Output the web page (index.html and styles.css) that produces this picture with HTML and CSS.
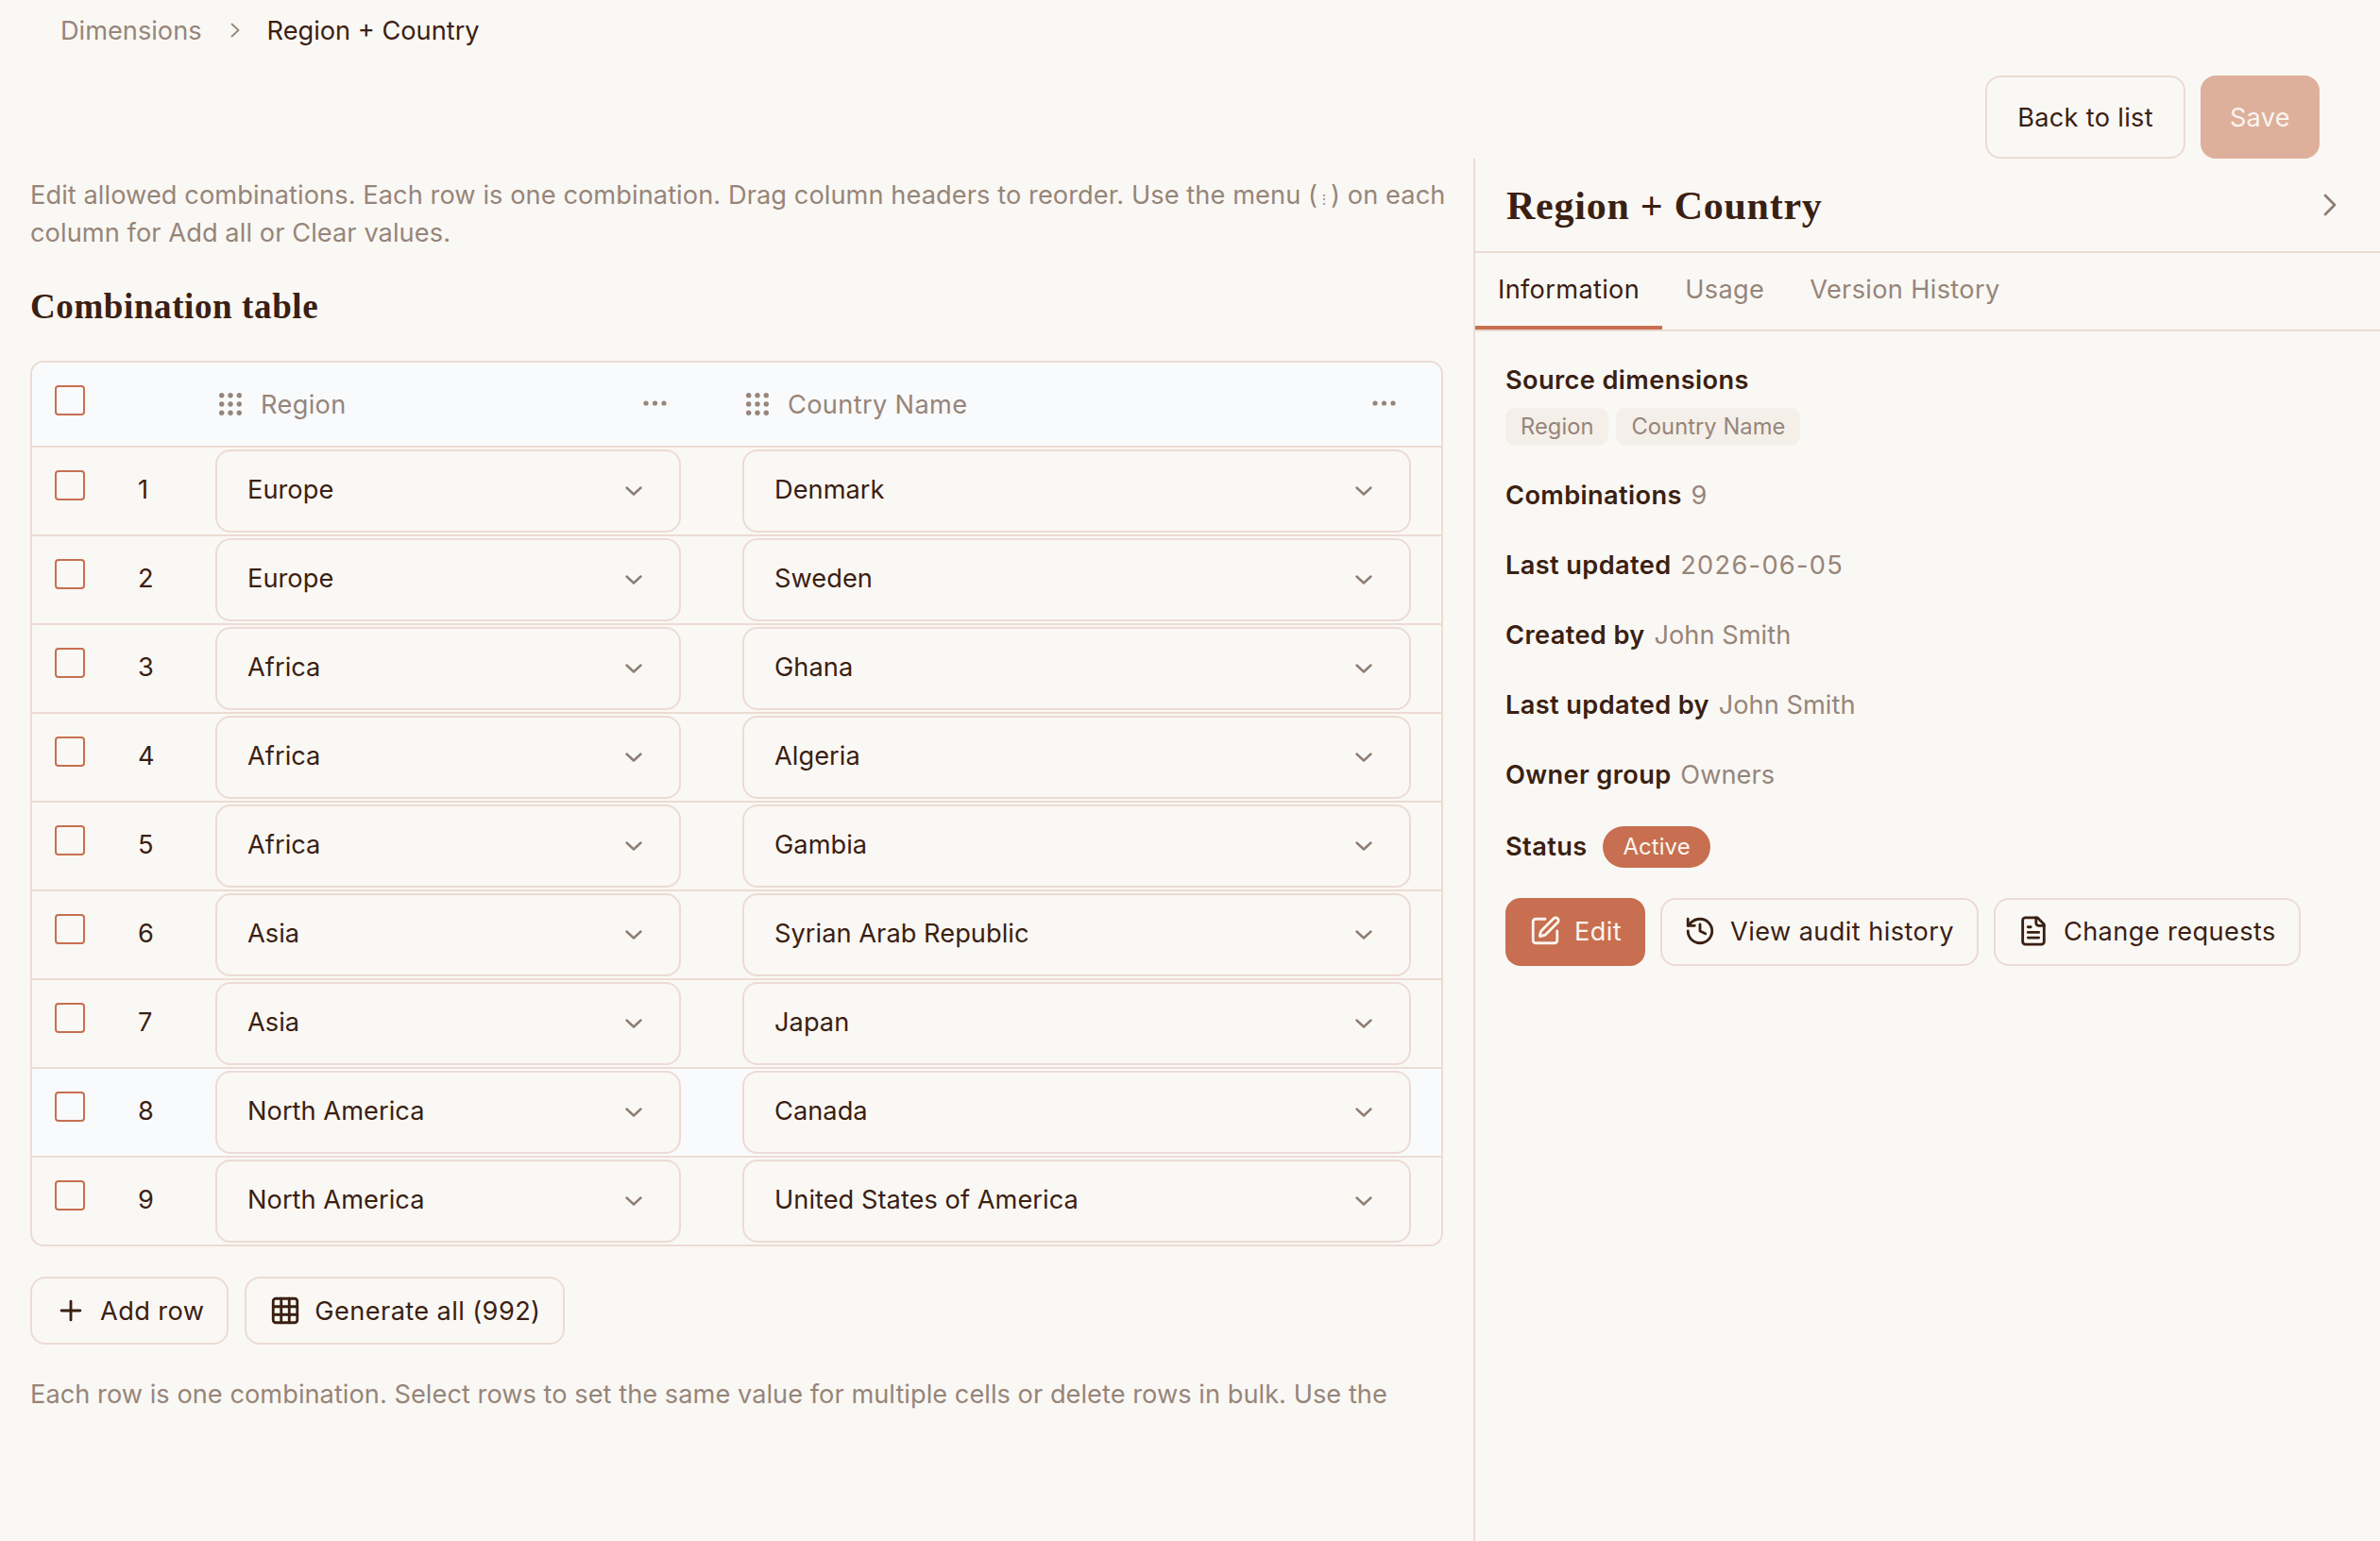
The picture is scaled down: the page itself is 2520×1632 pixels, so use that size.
FILE: index.html
```html
<!DOCTYPE html>
<html lang="en">
<head>
    <meta charset="UTF-8">
    <meta name="viewport" content="width=device-width, initial-scale=1.0">
    <title>Region + Country</title>
    <link rel="stylesheet" href="styles.css">
</head>
<body>
    <!-- Icon sprite -->
    <svg class="sprite" xmlns="http://www.w3.org/2000/svg">
        <symbol id="i-chevron" viewBox="0 0 18 10"><path d="M1.5 1.5 9 8.5l7.5-7" fill="none" stroke="currentColor" stroke-width="2.4" stroke-linecap="round" stroke-linejoin="round"/></symbol>
        <symbol id="i-grip" viewBox="0 0 24 24"><g fill="currentColor"><circle cx="2.7" cy="2.7" r="2.7"/><circle cx="12" cy="2.7" r="2.7"/><circle cx="21.3" cy="2.7" r="2.7"/><circle cx="2.7" cy="12" r="2.7"/><circle cx="12" cy="12" r="2.7"/><circle cx="21.3" cy="12" r="2.7"/><circle cx="2.7" cy="21.3" r="2.7"/><circle cx="12" cy="21.3" r="2.7"/><circle cx="21.3" cy="21.3" r="2.7"/></g></symbol>
        <symbol id="i-dots" viewBox="0 0 25 6"><g fill="currentColor"><circle cx="3" cy="3" r="2.6"/><circle cx="12.5" cy="3" r="2.6"/><circle cx="22" cy="3" r="2.6"/></g></symbol>
        <symbol id="i-plus" viewBox="0 0 24 24"><path d="M5 12h14M12 5v14"/></symbol>
        <symbol id="i-table" viewBox="0 0 24 24"><rect width="18" height="18" x="3" y="3" rx="2"/><path d="M3 9h18M3 15h18M9 3v18M15 3v18"/></symbol>
        <symbol id="i-edit" viewBox="0 0 24 24"><path d="M12 3H5a2 2 0 0 0-2 2v14a2 2 0 0 0 2 2h14a2 2 0 0 0 2-2v-7"/><path d="M18.375 2.625a1 1 0 0 1 3 3l-9.013 9.014a2 2 0 0 1-.853.505l-2.873.84a.5.5 0 0 1-.62-.62l.84-2.873a2 2 0 0 1 .506-.852z"/></symbol>
        <symbol id="i-history" viewBox="0 0 24 24"><path d="M3 12a9 9 0 1 0 9-9 9.75 9.75 0 0 0-6.74 2.74L3 8"/><path d="M3 3v5h5"/><path d="M12 7v5l4 2"/></symbol>
        <symbol id="i-file" viewBox="0 0 24 24"><path d="M15 2H6a2 2 0 0 0-2 2v16a2 2 0 0 0 2 2h12a2 2 0 0 0 2-2V7Z"/><path d="M14 2v4a2 2 0 0 0 2 2h4"/><path d="M10 9H8"/><path d="M16 13H8"/><path d="M16 17H8"/></symbol>
    </svg>

    <!-- Breadcrumb -->
    <nav class="breadcrumb">
        <span class="crumb-parent">Dimensions</span>
        <svg class="crumb-sep" viewBox="0 0 10 16"><path d="M1.5 1.5 8.5 8l-7 6.5" fill="none" stroke="currentColor" stroke-width="1.8" stroke-linecap="round" stroke-linejoin="round"/></svg>
        <span class="crumb-current">Region + Country</span>
    </nav>

    <!-- Page actions -->
    <div class="toolbar">
        <button class="btn btn-large">Back to list</button>
        <button class="btn btn-large btn-disabled">Save</button>
    </div>

    <div class="content">
        <!-- Main Content -->
        <main class="main">
            <p class="intro">Edit allowed combinations. Each row is one combination. Drag column headers to reorder. Use the menu (<span class="kebab">⋮</span>) on each column for Add all or Clear values.</p>
            <h2 class="section-title">Combination table</h2>

            <div class="combo-table">
                <div class="combo-row combo-head">
                    <span class="check"></span>
                    <span></span>
                    <div class="head-cell">
                        <svg class="grip"><use href="#i-grip"/></svg>
                        <span class="head-label">Region</span>
                        <svg class="dots"><use href="#i-dots"/></svg>
                    </div>
                    <div class="head-cell head-cell-wide">
                        <svg class="grip"><use href="#i-grip"/></svg>
                        <span class="head-label">Country Name</span>
                        <svg class="dots"><use href="#i-dots"/></svg>
                    </div>
                </div>

                <div class="combo-row">
                    <span class="check"></span><span class="row-num">1</span>
                    <div class="cell"><div class="select">Europe<svg class="chevron"><use href="#i-chevron"/></svg></div></div>
                    <div class="cell cell-wide"><div class="select">Denmark<svg class="chevron"><use href="#i-chevron"/></svg></div></div>
                </div>
                <div class="combo-row">
                    <span class="check"></span><span class="row-num">2</span>
                    <div class="cell"><div class="select">Europe<svg class="chevron"><use href="#i-chevron"/></svg></div></div>
                    <div class="cell cell-wide"><div class="select">Sweden<svg class="chevron"><use href="#i-chevron"/></svg></div></div>
                </div>
                <div class="combo-row">
                    <span class="check"></span><span class="row-num">3</span>
                    <div class="cell"><div class="select">Africa<svg class="chevron"><use href="#i-chevron"/></svg></div></div>
                    <div class="cell cell-wide"><div class="select">Ghana<svg class="chevron"><use href="#i-chevron"/></svg></div></div>
                </div>
                <div class="combo-row">
                    <span class="check"></span><span class="row-num">4</span>
                    <div class="cell"><div class="select">Africa<svg class="chevron"><use href="#i-chevron"/></svg></div></div>
                    <div class="cell cell-wide"><div class="select">Algeria<svg class="chevron"><use href="#i-chevron"/></svg></div></div>
                </div>
                <div class="combo-row">
                    <span class="check"></span><span class="row-num">5</span>
                    <div class="cell"><div class="select">Africa<svg class="chevron"><use href="#i-chevron"/></svg></div></div>
                    <div class="cell cell-wide"><div class="select">Gambia<svg class="chevron"><use href="#i-chevron"/></svg></div></div>
                </div>
                <div class="combo-row">
                    <span class="check"></span><span class="row-num">6</span>
                    <div class="cell"><div class="select">Asia<svg class="chevron"><use href="#i-chevron"/></svg></div></div>
                    <div class="cell cell-wide"><div class="select">Syrian Arab Republic<svg class="chevron"><use href="#i-chevron"/></svg></div></div>
                </div>
                <div class="combo-row">
                    <span class="check"></span><span class="row-num">7</span>
                    <div class="cell"><div class="select">Asia<svg class="chevron"><use href="#i-chevron"/></svg></div></div>
                    <div class="cell cell-wide"><div class="select">Japan<svg class="chevron"><use href="#i-chevron"/></svg></div></div>
                </div>
                <div class="combo-row combo-row-hover">
                    <span class="check"></span><span class="row-num">8</span>
                    <div class="cell"><div class="select">North America<svg class="chevron"><use href="#i-chevron"/></svg></div></div>
                    <div class="cell cell-wide"><div class="select">Canada<svg class="chevron"><use href="#i-chevron"/></svg></div></div>
                </div>
                <div class="combo-row">
                    <span class="check"></span><span class="row-num">9</span>
                    <div class="cell"><div class="select">North America<svg class="chevron"><use href="#i-chevron"/></svg></div></div>
                    <div class="cell cell-wide"><div class="select">United States of America<svg class="chevron"><use href="#i-chevron"/></svg></div></div>
                </div>
            </div>

            <div class="table-actions">
                <button class="btn"><svg class="icon"><use href="#i-plus"/></svg>Add row</button>
                <button class="btn"><svg class="icon"><use href="#i-table"/></svg>Generate all (992)</button>
            </div>

            <p class="hint">Each row is one combination. Select rows to set the same value for multiple cells or delete rows in bulk. Use the column's menu (<span class="kebab">⋮</span>) to add all or clear values.</p>
        </main>

        <!-- Details panel -->
        <aside class="panel">
            <div class="panel-header">
                <h2 class="panel-title">Region + Country</h2>
                <svg class="panel-close" viewBox="0 0 14 24"><path d="M2 2l10 10L2 22" fill="none" stroke="currentColor" stroke-width="2.8" stroke-linecap="round" stroke-linejoin="round"/></svg>
            </div>
            <div class="tabs">
                <span class="tab tab-active">Information</span>
                <span class="tab">Usage</span>
                <span class="tab">Version History</span>
            </div>
            <div class="panel-body">
                <div class="label">Source dimensions</div>
                <div class="chips">
                    <span class="chip">Region</span>
                    <span class="chip">Country Name</span>
                </div>
                <div class="info"><span class="label">Combinations</span> <span class="value">9</span></div>
                <div class="info"><span class="label">Last updated</span> <span class="value value-date">2026-06-05</span></div>
                <div class="info"><span class="label">Created by</span> <span class="value">John Smith</span></div>
                <div class="info"><span class="label">Last updated by</span> <span class="value">John Smith</span></div>
                <div class="info"><span class="label">Owner group</span> <span class="value">Owners</span></div>
                <div class="info info-status"><span class="label">Status</span><span class="badge">Active</span></div>
                <div class="panel-actions">
                    <button class="btn btn-primary"><svg class="icon"><use href="#i-edit"/></svg>Edit</button>
                    <button class="btn"><svg class="icon"><use href="#i-history"/></svg>View audit history</button>
                    <button class="btn"><svg class="icon"><use href="#i-file"/></svg>Change requests</button>
                </div>
            </div>
        </aside>
    </div>
</body>
</html>
```

FILE: styles.css
```css
body {
    margin: 0;
    height: 1632px;
    overflow: hidden;
    font-family: Inter, "Liberation Sans", sans-serif;
    font-size: 27.2px;
    letter-spacing: 0.05px;
    color: #3a2012;
    background-color: #faf8f4;
}

.sprite {
    display: none;
}

.breadcrumb {
    display: flex;
    align-items: center;
    height: 64px;
    padding-left: 64px;
    letter-spacing: 0;
}

.crumb-parent {
    color: #96857a;
}

.crumb-sep {
    width: 10px;
    height: 16px;
    margin: 0 29px 0 30px;
    color: #96857a;
}

.toolbar {
    display: flex;
    justify-content: flex-end;
    gap: 16px;
    margin-top: 16px;
    padding-right: 64px;
}

.btn {
    display: inline-flex;
    align-items: center;
    height: 72px;
    padding: 0 24px 2px 23px;
    gap: 15px;
    font: inherit;
    letter-spacing: 0.4px;
    color: #3a2012;
    background: transparent;
    border: 2px solid #ecdbd4;
    border-radius: 16px;
}

.btn-large {
    height: 88px;
    padding: 0 32px;
    letter-spacing: 0.3px;
}

.btn-disabled {
    padding: 0 29px;
    color: #fbf4ee;
    background-color: #deb09c;
    border-color: #deb09c;
}

.btn-primary {
    gap: 14px;
    padding-right: 23px;
    color: #fbf4ee;
    background-color: #c76f50;
    border-color: #c76f50;
}

.icon {
    width: 34px;
    height: 34px;
    fill: none;
    stroke: currentColor;
    stroke-width: 2;
    stroke-linecap: round;
    stroke-linejoin: round;
}

.content {
    display: flex;
    height: 1464px;
}

.main {
    width: 1560px;
    box-sizing: border-box;
    padding: 19px 32px 0;
}

.intro {
    margin: 0 -12px 0 0;
    line-height: 40px;
    color: #96857a;
    letter-spacing: 0.08px;
}

.kebab {
    font-size: 14px;
    line-height: 0;
}

.section-title {
    margin: 34px 0 33px;
    font-family: "Liberation Serif", serif;
    font-size: 37px;
    font-weight: 700;
    line-height: 48px;
    letter-spacing: 0.6px;
}

.combo-table {
    border: 2px solid #ecdbd4;
    border-radius: 14px;
    overflow: hidden;
}

.combo-row {
    display: grid;
    grid-template-columns: 112px 82px 493px 1fr;
    border-top: 2px solid #ecdbd4;
}

.combo-head {
    height: 88px;
    border-top: none;
    background-color: #f9fafc;
}

.combo-row-hover {
    background-color: #f9fafc;
}

.check {
    width: 32px;
    height: 32px;
    box-sizing: border-box;
    margin: 24px 0 0 24px;
    border: 2px solid #c76f50;
    border-radius: 4px;
}

.row-num {
    align-self: center;
    margin-top: -4px;
}

.head-cell {
    display: flex;
    align-items: center;
    color: #96857a;
    padding-right: 15px;
    padding-left: 4px;
}

.head-cell-wide {
    padding-left: 69px;
    padding-right: 48px;
}

.grip {
    width: 24px;
    height: 24px;
    margin-right: 20px;
}

.head-label {
    flex: 1;
    letter-spacing: 0.35px;
}

.dots {
    width: 25px;
    height: 6px;
    margin-top: -2px;
}

.cell {
    padding: 2px 0;
}

.cell-wide {
    padding: 2px 32px 2px 65px;
}

.select {
    display: flex;
    align-items: center;
    justify-content: space-between;
    box-sizing: border-box;
    height: 88px;
    padding: 0 39px 4px 32px;
    background-color: #faf8f4;
    border: 2px solid #ecdbd4;
    border-radius: 16px;
}

.chevron {
    width: 18px;
    height: 10px;
    margin-top: 4px;
    color: #8d7d73;
}

.table-actions {
    display: flex;
    gap: 17px;
    margin-top: 32px;
}

.table-actions .btn {
    gap: 14px;
    padding: 0 24px;
}

.hint {
    height: 48px;
    margin: 33px 0 0;
    overflow: hidden;
    line-height: 40px;
    color: #96857a;
    letter-spacing: 0.04px;
}

.panel {
    flex: 1;
    border-left: 2px solid #ecdbd4;
}

.panel-header {
    display: flex;
    align-items: center;
    justify-content: space-between;
    height: 98px;
    padding: 0 46px 0 33px;
    border-bottom: 2px solid #ecdbd4;
}

.panel-title {
    margin: 2px 0 0;
    font-family: "Liberation Serif", serif;
    font-size: 42px;
    font-weight: 700;
    letter-spacing: 0.75px;
}

.panel-close {
    width: 14px;
    height: 24px;
    color: #8d7d73;
}

.tabs {
    display: flex;
    height: 81px;
    border-bottom: 2px solid #ecdbd4;
}

.tab {
    height: 81px;
    box-sizing: border-box;
    padding: 0 24px;
    line-height: 78px;
    letter-spacing: 0.33px;
    color: #96857a;
}

.tab-active {
    color: #3a2012;
    border-bottom: 4px solid #c76f50;
}

.panel-body {
    padding: 32px 32px;
}

.label {
    font-weight: 600;
    letter-spacing: 0.38px;
}

.panel-body > .label {
    line-height: 40px;
}

.value {
    margin-left: 2px;
    color: #96857a;
}

.value-date {
    letter-spacing: 1.3px;
}

.chips {
    display: flex;
    gap: 8px;
    margin-top: 9px;
}

.chip {
    padding: 0 16px;
    font-size: 23.7px;
    line-height: 40px;
    color: #96857a;
    background-color: #f4efe9;
    border-radius: 10px;
}

.info {
    margin-top: 33px;
    line-height: 40px;
}

.info + .info {
    margin-top: 34px;
}

.info-status {
    display: flex;
    align-items: center;
    gap: 17px;
}

.badge {
    padding: 0 21px;
    font-size: 24px;
    line-height: 44px;
    color: #fbf4ee;
    background-color: #c76f50;
    border-radius: 22px;
}

.panel-actions {
    display: flex;
    gap: 16px;
    margin-top: 32px;
}
```
